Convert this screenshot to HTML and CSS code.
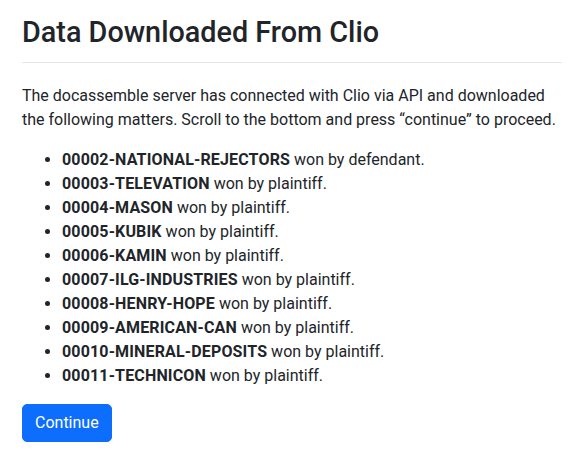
FILE: index.html
```html
<!DOCTYPE html>
<html lang="en">
<head>
<meta charset="utf-8">
<title>Data Downloaded From Clio</title>
<link rel="stylesheet" href="styles.css">
</head>
<body>
<main class="page">
  <h1 class="title">Data Downloaded From Clio</h1>
  <hr class="rule">
  <p class="intro">The docassemble server has connected with Clio via API and downloaded the following matters. Scroll to the bottom and press “continue” to proceed.</p>
  <ul class="matters">
    <li><strong>00002-NATIONAL-REJECTORS</strong> won by defendant.</li>
    <li><strong>00003-TELEVATION</strong> won by plaintiff.</li>
    <li><strong>00004-MASON</strong> won by plaintiff.</li>
    <li><strong>00005-KUBIK</strong> won by plaintiff.</li>
    <li><strong>00006-KAMIN</strong> won by plaintiff.</li>
    <li><strong>00007-ILG-INDUSTRIES</strong> won by plaintiff.</li>
    <li><strong>00008-HENRY-HOPE</strong> won by plaintiff.</li>
    <li><strong>00009-AMERICAN-CAN</strong> won by plaintiff.</li>
    <li><strong>00010-MINERAL-DEPOSITS</strong> won by plaintiff.</li>
    <li><strong>00011-TECHNICON</strong> won by plaintiff.</li>
  </ul>
  <div class="actions">
    <button class="btn-continue" type="button">Continue</button>
  </div>
</main>
</body>
</html>
```
FILE: styles.css
```css
html, body {
  margin: 0;
  padding: 0;
  background: #fff;
}
body {
  font-family: Roboto, "Liberation Sans", sans-serif;
  font-size: 16px;
  line-height: 24px;
  color: #212529;
}
.page {
  width: 540px;
  padding: 15px 12px 0 22px;
}
.title {
  margin: 0;
  font-size: 28.8px;
  line-height: 34px;
  font-weight: 500;
  color: #212529;
}
.rule {
  margin: 13px 0 0;
  border: 0;
  border-top: 1px solid #e5e5e5;
  height: 0;
}
.intro {
  margin: 21px 0 16px;
}
.matters {
  margin: 0 0 16px;
  padding-left: 40px;
}
.matters strong {
  font-weight: 700;
  letter-spacing: 0.15px;
}
.actions {
  display: flex;
}
.btn-continue {
  font-family: inherit;
  font-size: 16px;
  line-height: 24px;
  padding: 6px 12px;
  color: #fff;
  background: #0d6efd;
  border: 1px solid #0d6efd;
  border-radius: 5px;
  cursor: pointer;
}
```
